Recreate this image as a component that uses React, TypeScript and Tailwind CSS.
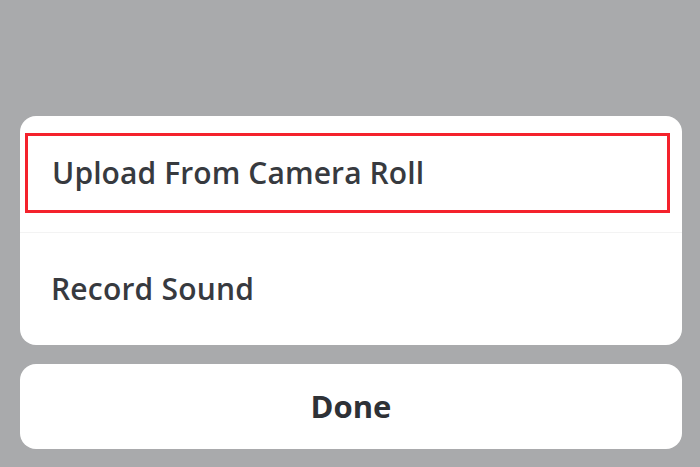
export default function App() {
  return (
    <div className="w-[700px] h-[467px] bg-[#a9aaac] overflow-hidden flex flex-col pt-[116px] pl-[20px] pr-[18px]" style={{ fontFamily: '"Open Sans", "Liberation Sans", sans-serif' }}>
      <div className="bg-white rounded-[16px] flex flex-col h-[229px] overflow-hidden">
        <div className="h-[116px] pt-[17px] pl-[5px] pr-[12px]">
          <div className="h-[80px] border-[3px] border-[#f4222c] flex items-center pl-[24px]">
            <span className="text-[30px] font-semibold text-[#373a3f] leading-none tracking-[0.1px]">Upload From Camera Roll</span>
          </div>
        </div>
        <div className="h-px bg-[#f3f3f3]" />
        <div className="flex-1 flex items-center pl-[31px]">
          <span className="text-[30px] font-semibold text-[#373a3f] leading-none tracking-[0.2px]">Record Sound</span>
        </div>
      </div>
      <div className="mt-[19px] bg-white rounded-[16px] h-[85px] flex items-center justify-center">
        <span className="text-[31px] font-bold text-[#2e3136] leading-none">Done</span>
      </div>
    </div>
  );
}
